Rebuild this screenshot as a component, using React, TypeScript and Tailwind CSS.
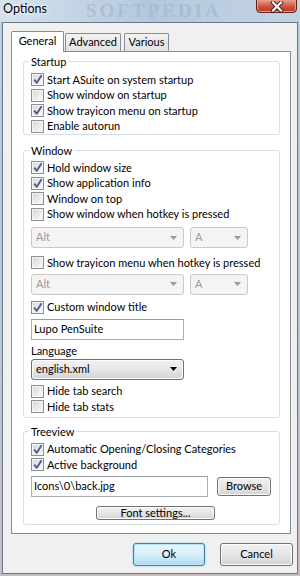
import React from 'react'

function CheckBox({ checked }: { checked?: boolean }) {
  return (
    <span className="w-[13px] h-[13px] shrink-0 border border-[#8e8f8f] bg-[#f6f6f6] flex items-center justify-center">
      <span className="relative w-[11px] h-[11px] border border-[#f4f4f4] bg-linear-to-br from-[#d8d8d8] to-[#fafafa]">
        {checked && (
          <svg className="absolute left-[0px] top-[-1px]" width="10" height="11" viewBox="0 0 10 11">
            <path d="M1.2 5.6 L3.8 8.8 L8.6 1.2" fill="none" stroke="#4b5f8f" strokeWidth="1.9" strokeLinejoin="round" />
          </svg>
        )}
      </span>
    </span>
  )
}

function Row({ label, checked }: { label: string; checked?: boolean }) {
  return (
    <div className="h-[15.5px] flex items-center gap-[3px] whitespace-nowrap">
      <CheckBox checked={checked} />
      <span>{label}</span>
    </div>
  )
}

function Arrow({ color }: { color: string }) {
  return (
    <svg width="7" height="4" viewBox="0 0 7 4">
      <path d="M0 0 H7 L3.5 4 Z" fill={color} />
    </svg>
  )
}

function DisabledCombo({ text, className }: { text: string; className: string }) {
  return (
    <div className={`h-[21px] border border-[#c9c9c9] rounded-[3px] bg-[#f4f4f4] flex items-center justify-between pl-[4px] pr-[6px] text-[#9a9a9a] ${className}`}>
      <span>{text}</span>
      <Arrow color="#9b9b9b" />
    </div>
  )
}

function HotkeyCombos() {
  return (
    <div className="flex gap-[6px]">
      <DisabledCombo text="Alt" className="w-[153px]" />
      <DisabledCombo text="A" className="w-[58px]" />
    </div>
  )
}

function Button({ children, className }: { children: React.ReactNode; className: string }) {
  return (
    <div className={`border border-[#707070] rounded-[3px] bg-linear-to-b from-[#f2f2f2] via-[#e6e6e6] to-[#d4d4d4] flex items-center justify-center shadow-[inset_0_0_0_1px_#fcfcfc] ${className}`}>
      {children}
    </div>
  )
}

function Group({ title, className, children }: { title: string; className: string; children: React.ReactNode }) {
  return (
    <fieldset className={`border border-[#d5dfe5] rounded-[3px] px-[7px] ${className}`}>
      <legend className="px-[2px] -ml-[2px] leading-[15px]">{title}</legend>
      {children}
    </fieldset>
  )
}

export default function App() {
  return (
    <div className="relative w-[300px] h-[576px] overflow-hidden flex flex-col bg-linear-to-b from-[#bccde0] via-[#b7c8db] to-[#c9bcc0] font-[Lato,sans-serif] text-[11px] text-black">
      {/* title bar */}
      <div className="relative h-[22px] flex items-start justify-between bg-linear-to-r from-[#d6e1ec] via-[#b4c8dd] to-[#c4d3e4]">
        <span className="pl-[3px] pt-[1px] leading-[16px] text-[12.5px] [text-shadow:0_0_6px_#ffffff,0_0_3px_#ffffff]">Options</span>
        <span className="absolute left-[86px] top-0 h-[22px] text-[19px] font-bold tracking-[3px] text-[#a3b8cf] opacity-70 font-['Liberation_Serif',serif] leading-[22px]">SOFTPEDIA</span>
        <div className="relative mr-[3px] w-[41px] h-[14px] -mt-px border border-[#5e2218] rounded-b-[4px] bg-linear-to-b from-[#e7a291] via-[#cc5a44] to-[#b5301c] flex items-center justify-center shadow-[inset_0_0_0_1px_#e99a8c]">
          <svg width="14" height="11" viewBox="0 0 14 11">
            <path d="M3 1.5 L11 9.5 M11 1.5 L3 9.5" stroke="#4a1a12" strokeWidth="4" strokeLinecap="square" />
            <path d="M3 1.5 L11 9.5 M11 1.5 L3 9.5" stroke="#ffffff" strokeWidth="2.2" strokeLinecap="square" />
          </svg>
        </div>
      </div>

      {/* client area */}
      <div className="mx-[2px] mb-[2px] h-[552px] border border-[#687789] bg-[#f0f0f0] pl-[8px] pr-[6px] pt-[8px]">
        {/* tabs */}
        <div className="h-[20px] flex items-end">
          <div className="relative z-10 -mb-px w-[53px] h-[21px] border border-b-0 border-[#898c95] rounded-t-[2px] bg-white flex items-center justify-center pb-[2px]">
            General
          </div>
          <div className="w-[56px] h-[18px] ml-px border border-b-0 border-[#898c95] rounded-t-[2px] bg-linear-to-b from-[#f3f3f3] to-[#e2e2e2] flex items-center justify-center">
            Advanced
          </div>
          <div className="w-[45px] h-[18px] ml-[3px] border border-b-0 border-[#898c95] rounded-t-[2px] bg-linear-to-b from-[#f3f3f3] to-[#e2e2e2] flex items-center justify-center">
            Various
          </div>
        </div>

        {/* tab page */}
        <div className="border border-[#898c95] bg-white pl-[11px] pr-[10px] pt-[2px] pb-[8px]">
          <Group title="Startup" className="">
            <div className="pt-[3px]">
              <Row label="Start ASuite on system startup" checked />
              <Row label="Show window on startup" />
              <Row label="Show trayicon menu on startup" checked />
              <Row label="Enable autorun" />
            </div>
          </Group>

          <Group title="Window" className="mt-[8px] pb-[2px]">
            <div className="pt-[2px]">
              <Row label="Hold window size" checked />
              <Row label="Show application info" checked />
              <Row label="Window on top" />
              <Row label="Show window when hotkey is pressed" />
              <div className="mt-[5px]">
                <HotkeyCombos />
              </div>
              <div className="mt-[7px]">
                <Row label="Show trayicon menu when hotkey is pressed" />
              </div>
              <div className="mt-[3px]">
                <HotkeyCombos />
              </div>
              <div className="mt-[5px]">
                <Row label="Custom window title" checked />
              </div>
              <div className="mt-[4px] w-[153px] h-[21px] border border-[#abadb3] border-t-[#9a9ca3] bg-white flex items-center pl-[2px]">
                Lupo PenSuite
              </div>
              <div className="mt-[3px] h-[15.5px] flex items-center">Language</div>
              <Button className="w-[153px] h-[21px] !justify-between pl-[4px] pr-[6px]">
                <span>english.xml</span>
                <Arrow color="#000000" />
              </Button>
              <div className="mt-[4px]">
                <Row label="Hide tab search" />
                <Row label="Hide tab stats" />
              </div>
            </div>
          </Group>

          <Group title="Treeview" className="mt-[6px] pb-[4px]">
            <div className="pt-[3px]">
              <Row label="Automatic Opening/Closing Categories" checked />
              <Row label="Active background" checked />
              <div className="mt-[3px] flex items-center gap-[9px]">
                <div className="w-[177px] h-[21px] border border-[#abadb3] border-t-[#9a9ca3] bg-white flex items-center pl-[2px]">
                  Icons\0\back.jpg
                </div>
                <Button className="w-[54px] h-[19px]">Browse</Button>
              </div>
              <Button className="mt-[9px] ml-[65px] w-[119px] h-[14px] leading-[12px]">Font settings...</Button>
            </div>
          </Group>
        </div>

        {/* dialog buttons */}
        <div className="mt-[9px] -mr-[2px] flex justify-end gap-[15px]">
          <div className="w-[72px] h-[23px] border border-[#3c7fb1] rounded-[3px] bg-linear-to-b from-[#eaf6fd] via-[#d9f0fc] to-[#a7d9f5] flex items-center justify-center shadow-[inset_0_0_0_1px_#b8e3f8,0_0_2px_#7ec4ea]">
            Ok
          </div>
          <Button className="w-[73px] h-[23px]">Cancel</Button>
        </div>
      </div>
    </div>
  )
}
